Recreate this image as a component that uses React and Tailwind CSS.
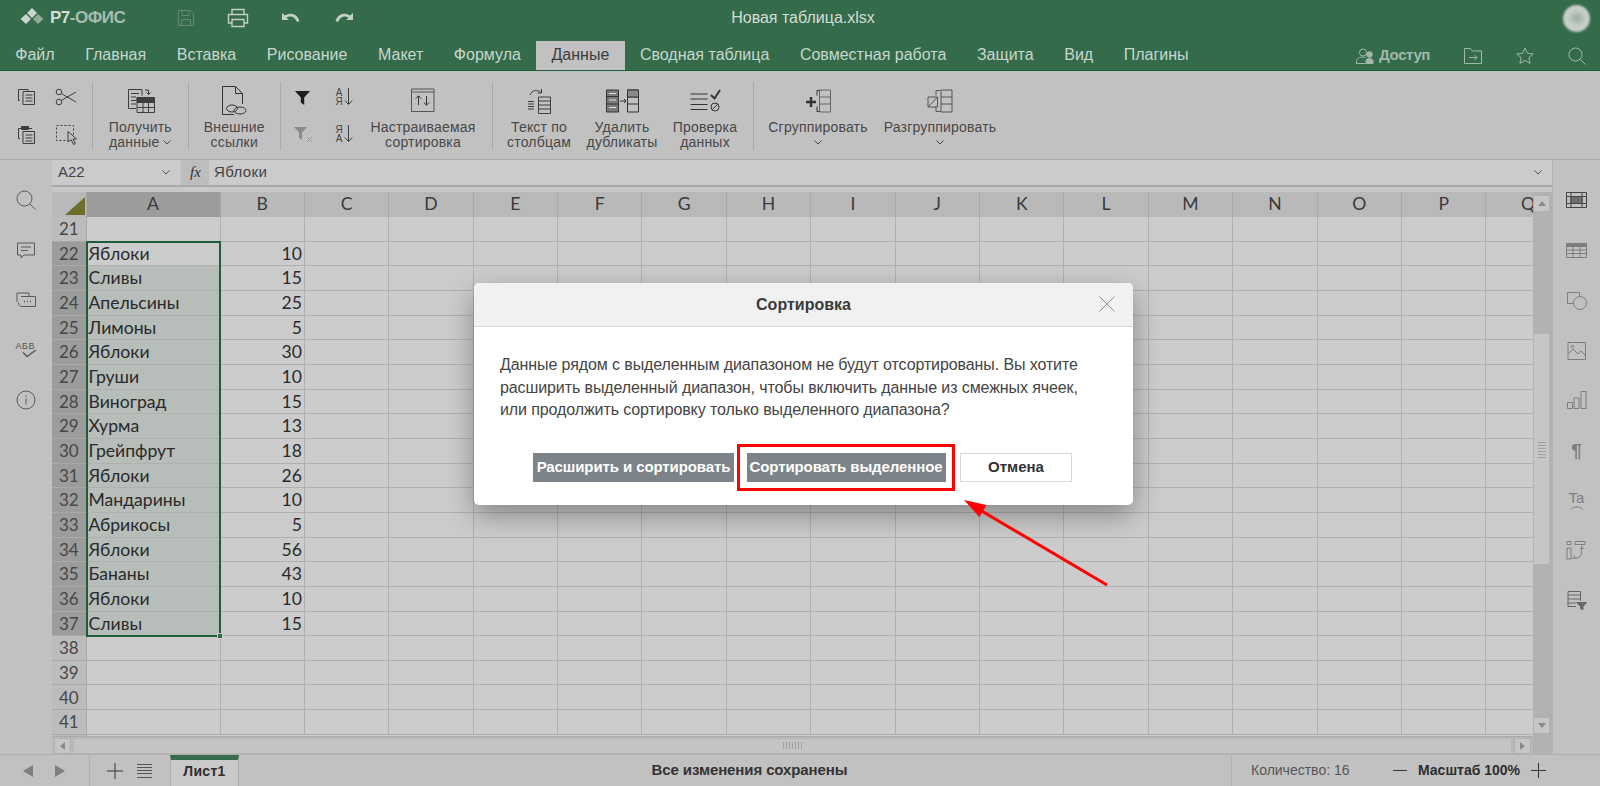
import React from 'react';

const tabs = ['Файл', 'Главная', 'Вставка', 'Рисование', 'Макет', 'Формула', 'Данные', 'Сводная таблица', 'Совместная работа', 'Защита', 'Вид', 'Плагины'];
const cols = ['B', 'C', 'D', 'E', 'F', 'G', 'H', 'I', 'J', 'K', 'L', 'M', 'N', 'O', 'P', 'Q'];
const data = {
  22: ['Яблоки', 10], 23: ['Сливы', 15], 24: ['Апельсины', 25], 25: ['Лимоны', 5],
  26: ['Яблоки', 30], 27: ['Груши', 10], 28: ['Виноград', 15], 29: ['Хурма', 13],
  30: ['Грейпфрут', 18], 31: ['Яблоки', 26], 32: ['Мандарины', 10], 33: ['Абрикосы', 5],
  34: ['Яблоки', 56], 35: ['Бананы', 43], 36: ['Яблоки', 10], 37: ['Сливы', 15],
};
const rows = Array.from({ length: 21 }, (_, i) => i + 21);

function Ico({ w = 24, h = 24, className = '', sw = 1, children }) {
  return (
    <svg width={w} height={h} viewBox={`0 0 ${w} ${h}`} fill="none" stroke="currentColor" strokeWidth={sw} className={`block shrink-0 ${className}`}>
      {children}
    </svg>
  );
}

function Chevron({ className = '' }) {
  return (
    <svg width="8" height="5" viewBox="0 0 8 5" fill="none" stroke="currentColor" className={className}>
      <path d="M.5.5 4 4 7.5.5" />
    </svg>
  );
}

function Tool({ icon, lines, w, chevronInline, chevronBelow }) {
  return (
    <div className={`flex flex-col items-center shrink-0 ${w}`}>
      <div className="h-[38px] pb-px flex items-center justify-center">{icon}</div>
      <div className="text-center text-[14px] leading-[15px] tracking-[0.2px] text-[#484848] whitespace-nowrap">
        <div>{lines[0]}</div>
        <div className="flex items-center justify-center gap-1 h-[15px]">
          {lines[1]}
          {chevronInline && <Chevron />}
          {chevronBelow && <Chevron />}
        </div>
      </div>
    </div>
  );
}

function Sep() {
  return <div className="w-px h-[68px] bg-[#a9a9a9] shrink-0" />;
}

function Cell({ children }) {
  return <div className="h-[30px] flex items-center justify-center text-[#3d3d3d]">{children}</div>;
}

function Side({ children }) {
  return <div className="h-[50px] shrink-0 flex items-center justify-center">{children}</div>;
}

export default function App() {
  return (
    <div className="relative w-[1600px] h-[786px] overflow-hidden flex flex-col bg-[#c1c1c1] font-['Liberation_Sans',Arial,sans-serif]">
      {/* заголовок */}
      <div className="h-[71px] shrink-0 bg-[#336b4b] border-b border-[#1f6440] flex flex-col">
        <div className="h-[35px] grid grid-cols-[1fr_auto_1fr] items-center pl-5 pr-[20px] pt-px">
          <div className="flex items-center">
            <svg width="24" height="20" viewBox="0 0 24 20" className="shrink-0">
              <path d="M12 0l5 5-5 5-5-5z" fill="#c9d6ce" />
              <path d="M6 6l5 5-5 5-5.500-5z" fill="#c9d6ce" />
              <path d="M18 6l5.500 5-5.500 5-5-5z" fill="#8fa99a" />
            </svg>
            <span className="ml-[6px] text-[17px] font-bold text-[#d3ddd7] w-[74px] whitespace-nowrap tracking-[-0.5px]">Р7<span className="text-[#a9bcb1]">-ОФИС</span></span>
            <Ico w={18} h={18} className="ml-[53px] text-[#648a74]">
              <path d="M1.5 1.500h12l3 3v12h-15zM5 1.500v5h7v-5M4.500 16.500v-6h9v6" />
            </Ico>
            <Ico w={22} h={20} className="ml-[32px] text-[#c3d0c8]" sw={1.4}>
              <path d="M5 6V1.500h12V6M5 15H1.500V6.500h19V15H17M5 11.500h12v7H5z" />
            </Ico>
            <svg width="18" height="12" viewBox="0 0 18 12" className="ml-[33px] text-[#c3d0c8]" fill="currentColor">
              <path d="M0 1v7h7L4.500 5.700C8 3.500 12.500 4.500 15 10l2.500-1C15 2 9 0 3 3.500z" />
            </svg>
            <svg width="18" height="12" viewBox="0 0 18 12" className="ml-[35px] text-[#c3d0c8]" fill="currentColor">
              <path d="M18 1v7h-7l2.500-2.300C10 3.500 5.500 4.500 3 10L.5 9C3 2 9 0 15 3.500z" />
            </svg>
          </div>
          <div className="text-[16px] text-[#d3ddd7] pl-[6px]">Новая таблица.xlsx</div>
          <div className="flex justify-end -mr-[10px]">
            <div className="w-[27px] h-[27px] rounded-full bg-[#c7cfca] blur-[1px] flex items-center justify-center">
              <div className="w-[12px] h-[10px] rounded-full bg-[#9fb0a6] blur-[2px]" />
            </div>
          </div>
        </div>
        <div className="flex-1 flex items-end">
          {tabs.map((t) => (
            <div
              key={t}
              className={`h-[29px] flex items-center pb-[1px] px-[15.3px] text-[16px] whitespace-nowrap ${t === 'Данные' ? 'bg-[#c1c1c1] text-[#3c3c3c]' : 'text-[#c9d6ce]'}`}
            >
              {t}
            </div>
          ))}
          <div className="ml-auto h-[29px] flex items-center gap-[34px] pr-[14px] text-[#a3b8ab]">
            <div className="flex items-center gap-[5px]">
              <Ico w={18} h={16}>
                <circle cx="7" cy="4.500" r="3.500" />
                <path d="M.5 15.500v-2c0-3 3-4.500 6.500-4.500 1 0 2 .1 2.800.4M.5 15.500h9" />
                <circle cx="13.500" cy="6.500" r="2.800" fill="currentColor" />
                <path d="M10 15.500v-2.500c0-1.500 1.500-2.500 3.500-2.500s3.500 1 3.500 2.500v2.500z" fill="currentColor" />
              </Ico>
              <span className="text-[15px] font-bold tracking-[-0.4px]">Доступ</span>
            </div>
            <Ico w={18} h={16}>
              <path d="M.5 15.500v-15h6l2 2.500h9v12.500zM5 9.500h8M10.500 7l2.500 2.500L10.500 12" />
            </Ico>
            <Ico w={18} h={18}>
              <path d="M9 1l2.400 5.300 5.800.6-4.400 3.800 1.300 5.700L9 13.500l-5.100 2.900 1.300-5.700L.8 6.900l5.800-.6z" />
            </Ico>
            <Ico w={18} h={18}>
              <circle cx="7.500" cy="7.500" r="6.500" />
              <path d="M12.300 12.300 17.500 17.500" />
            </Ico>
          </div>
        </div>
      </div>

      {/* панель инструментов */}
      <div className="h-[89px] shrink-0 flex items-start pt-[11px] border-b border-[#aaaaaa]">
        <div className="w-[92px] pl-[7.5px] grid grid-cols-[39px_39px] grid-rows-[30px_30px] gap-y-[7px] shrink-0">
          <Cell>
            <Ico w={20} h={18}>
              <path d="M3 12.500H1.500V1.500H11V3M6 3.500h11.500v13H6zM8.500 7h7M8.500 10h7M8.500 13h7" />
            </Ico>
          </Cell>
          <Cell>
            <Ico w={22} h={18}>
              <circle cx="4" cy="4" r="2.800" />
              <circle cx="4" cy="14" r="2.800" />
              <path d="M6.300 5.500 21 14M6.300 12.500 21 4" />
            </Ico>
          </Cell>
          <Cell>
            <Ico w={20} h={19}>
              <path d="M3 13.500H1.500V3.500H15M6 6.500h11.500v12H6zM8.500 10h7M8.500 13h7M8.500 16h7" />
              <path d="M4.500 1.500h7v3h-7z" fill="currentColor" />
            </Ico>
          </Cell>
          <Cell>
            <Ico w={23} h={21}>
              <path d="M1.500 1.500h17v15h-17z" strokeDasharray="2 2" />
              <path d="M13 7.500v10.500l3-2.500 2.500 5 1.800-1-2.300-4.500h3.500z" fill="#c1c1c1" />
            </Ico>
          </Cell>
        </div>
        <Sep />
        <Tool
          w="w-[94.500px]"
          chevronInline
          lines={['Получить', 'данные']}
          icon={
            <Ico w={28} h={26} className="text-[#3d3d3d] ml-[2px]">
              <path d="M9 20.500H1.500V1.500H15v6M4 5.500h8M4 9h5M4 12.500h5M4 16h5M18 2h3.500v4M19.500 4.500l2 2 2-2" />
              <path d="M10 9.500h17.500v15H10zM10 14.500h17.500M10 19.500h17.500M16 9.500v15M21.500 9.500v15" />
              <path d="M10 9.500h17.500v4H10z" fill="currentColor" />
            </Ico>
          }
        />
        <Sep />
        <Tool
          w="w-[91.500px]"
          lines={['Внешние', 'ссылки']}
          icon={
            <Ico w={27} h={30} className="text-[#333]">
              <path d="M13 28.500H1.500V.5h13l7 7V18M14.500.5v7h7" />
              <ellipse cx="11" cy="22.500" rx="5.500" ry="3.500" />
              <ellipse cx="19" cy="24.500" rx="6" ry="3.500" />
            </Ico>
          }
        />
        <Sep />
        <div className="w-[42px] shrink-0 flex flex-col gap-[7px]">
          <Cell>
            <svg width="15" height="15" viewBox="0 0 15 15" fill="#1d1d1d"><path d="M0 1h15L9.200 7.500V15L5.800 12.500v-5z" /></svg>
          </Cell>
          <Cell>
            <svg width="19" height="17" viewBox="0 0 19 17" fill="#8a8a8a" className="ml-[3px]">
              <path d="M0 1h13L8 6.500V14L5 11.500v-5z" />
              <path d="M13 11l5 5M18 11l-5 5" stroke="#9b9b9b" fill="none" />
            </svg>
          </Cell>
        </div>
        <div className="w-[42px] shrink-0 flex flex-col gap-[7px]">
          <Cell>
            <div className="flex items-center gap-[1px]">
              <div className="text-[10px] leading-[9px] text-center text-[#444]">А<br />Я</div>
              <Ico w={9} h={18}><path d="M4.500 0v16M.8 12.500l3.700 4 3.700-4" /></Ico>
            </div>
          </Cell>
          <Cell>
            <div className="flex items-center gap-[1px]">
              <div className="text-[10px] leading-[9px] text-center text-[#444]">Я<br />А</div>
              <Ico w={9} h={18}><path d="M4.500 0v16M.8 12.500l3.700 4 3.700-4" /></Ico>
            </div>
          </Cell>
        </div>
        <Tool
          w="w-[116px]"
          lines={['Настраиваемая', 'сортировка']}
          icon={
            <Ico w={24} h={25} className="text-[#555]">
              <path d="M.5 1h22.500v22.500H.5zM.5 4h22.500" />
              <path d="M7.500 17V8M4.800 10.500l2.700-2.700 2.700 2.700M15.500 8v9M12.800 14.500l2.700 2.700 2.700-2.700" stroke="#333" />
            </Ico>
          }
        />
        <div className="w-[11px] shrink-0" />
        <Sep />
        <div className="flex shrink-0 pl-[4.500px] w-[260px]">
          <Tool
            w="w-[83px]"
            lines={['Текст по', 'столбцам']}
            icon={
              <Ico w={24} h={26} className="text-[#3d3d3d]">
                <path d="M3 7C5 1.500 11 1.500 14 4.500M14.500 1v4h-4" />
                <path d="M1 13.500h6M1 16h6M1 18.500h6M1 21h6" />
                <path d="M11.500 9h12v16.500h-12zM11.500 13h12M11.500 17h12M11.500 21h12" />
              </Ico>
            }
          />
          <Tool
            w="w-[83px]"
            lines={['Удалить', 'дубликаты']}
            icon={
              <Ico w={33} h={24} className="text-[#333]">
                <path d="M.5 1h12v22H.5z" fill="#7a7a7a" />
                <path d="M3 4.500h7M3 11h7M3 18.500h7" stroke="#ddd" />
                <path d="M.5 7.500h12M.5 15h12" />
                <path d="M14 12h6M18 10l2 2-2 2" />
                <path d="M21.500 1h11v22h-11zM21.500 8h11M21.500 15h11" />
                <path d="M21.500 1h11v7h-11z" fill="#8a8a8a" />
              </Ico>
            }
          />
          <Tool
            w="w-[83px]"
            lines={['Проверка', 'данных']}
            icon={
              <Ico w={31} h={24} className="text-[#333]">
                <path d="M.5 5h17M.5 10h17M.5 15.500h17M.5 20.500h17" />
                <path d="M21 6l3.500 3.500L30 1" strokeWidth="2" />
                <circle cx="25" cy="18" r="4" />
                <path d="M22.300 20.500l5.500-5.500" />
              </Ico>
            }
          />
        </div>
        <Sep />
        <div className="flex gap-[7px] pl-[14px] shrink-0">
          <Tool
            w="w-[100px]"
            chevronBelow
            lines={['Сгруппировать', '']}
            icon={
              <Ico w={26} h={24} className="text-[#333]">
                <path d="M15.500 1.500h-3.500v5M12 17.500v5h3.500" />
                <path d="M1 13h10M6 8v10" strokeWidth="2.500" />
                <path d="M14.500 1h11v22h-11zM14.500 8h11M14.500 15h11" stroke="#666" />
              </Ico>
            }
          />
          <Tool
            w="w-[130px]"
            chevronBelow
            lines={['Разгруппировать', '']}
            icon={
              <Ico w={26} h={24} className="text-[#555]">
                <path d="M13.500 1.500H9v5M9 17.500v5h4.500" />
                <path d="M1 8h9.500v10H1zM1 18l9.500-10" />
                <path d="M14 1h11v22H14zM14 8h11M14 15h11" />
              </Ico>
            }
          />
        </div>
      </div>

      <div className="flex-1 flex min-h-0">
        {/* левая колонка */}
        <div className="w-[52px] shrink-0 flex flex-col pt-[15px] text-[#5a5a5a]">
          <Side><Ico w={20} h={20}><circle cx="8.500" cy="8.500" r="7.500" /><path d="M14 14l5.500 5.500" /></Ico></Side>
          <Side><Ico w={20} h={17}><path d="M1.500 1h17v12H8l-3 3v-3H1.500zM5 5h10M5 8.500h7" /></Ico></Side>
          <Side>
            <Ico w={20} h={16}>
              <path d="M1 10V1h12v3" />
              <path d="M5 4.500h14.500v10H5l-2.500-2v-2" />
              <path d="M8 9.500h1M11 9.500h1M14 9.500h1" strokeWidth="1.500" />
            </Ico>
          </Side>
          <Side>
            <div className="w-[21px]">
              <div className="text-[9px] leading-[8px] tracking-[0.5px] text-[#555]">АБВ</div>
              <svg width="15" height="8" viewBox="0 0 15 8" fill="none" stroke="currentColor" strokeWidth="1.5" className="ml-[6px]"><path d="M1 2.500l4 4 9-6.500" /></svg>
            </div>
          </Side>
          <Side><Ico w={20} h={20}><circle cx="10" cy="10" r="9" /><path d="M10 8.500v6M10 5.500v1.500" /></Ico></Side>
        </div>

        {/* центр */}
        <div className="flex-1 min-w-0 flex flex-col">
          <div className="h-[27px] shrink-0 flex border-b-2 border-[#aaaaaa] bg-[#cbcbcb]">
            <div className="w-[128px] flex items-center justify-between pl-[6px] pr-[10px] text-[15px] text-[#444]">
              A22
              <Chevron className="text-[#555]" />
            </div>
            <div className="w-[2px] bg-[#c1c1c1]" />
            <div className="w-[27px] bg-[#bdbdbd] flex items-center justify-center font-['Liberation_Serif',serif] italic text-[15px] text-[#333]">fx</div>
            <div className="flex-1 flex items-center justify-between pl-[5px] pr-[10px] text-[15px] tracking-[0.4px] text-[#444]">
              Яблоки
              <Chevron className="text-[#555]" />
            </div>
          </div>
          <div className="h-[5px] shrink-0 bg-[#c8c8c8]" />
          <div className="flex-1 min-h-0 flex">
            <div className="flex-1 min-w-0 flex flex-col">
              <div className="relative flex-1 min-h-0 overflow-hidden bg-[#cccccc] font-['Lato',sans-serif] text-[17.6px] text-[#2a2a2a]">
                <div className="flex h-[25px] text-[#3a3a3a]">
                  <div className="relative w-[34.500px] shrink-0 bg-[#b9b9b9] border-r border-[#a8a8a8]">
                    <svg width="20" height="18" viewBox="0 0 20 18" className="absolute right-[1px] bottom-[2px]"><path d="M20 0v18H0z" fill="#6e6e2c" /></svg>
                  </div>
                  <div className="w-[134px] shrink-0 bg-[#9c9c9c] border-r border-[#a8a8a8] flex items-center justify-center">A</div>
                  {cols.map((c) => (
                    <div key={c} className="w-[84.400px] shrink-0 bg-[#b9b9b9] border-r border-[#a8a8a8] flex items-center justify-center">{c}</div>
                  ))}
                </div>
                {rows.map((r) => {
                  const sel = r >= 22 && r <= 37;
                  const row = data[r];
                  return (
                    <div key={r} className="flex h-[24.670px]">
                      <div className={`w-[34.500px] shrink-0 border-b border-r border-[#a8a8a8] flex items-center justify-center text-[17px] text-[#474747] ${sel ? 'bg-[#9c9c9c]' : 'bg-[#bcbcbc]'}`}>{r}</div>
                      <div className={`w-[134px] shrink-0 border-b border-r border-[#b0b0b0] pl-[2px] pt-px flex items-center whitespace-nowrap ${sel && r !== 22 ? 'bg-[#b7bdb9]' : ''}`}>{row ? row[0] : ''}</div>
                      {cols.map((c, i) => (
                        <div key={c} className="w-[84.400px] shrink-0 border-b border-r border-[#b0b0b0] pr-[2px] pt-px flex items-center justify-end">{i === 0 && row ? row[1] : ''}</div>
                      ))}
                    </div>
                  );
                })}
                {/* хвост строки 42 */}
                <div className="flex h-[3px]">
                  <div className="w-[34.500px] shrink-0 bg-[#bcbcbc] border-r border-[#a8a8a8]" />
                </div>
                <div className="absolute left-[34px] top-[49px] w-[135px] h-[396px] border-2 border-[#1f5c3c]">
                  <div className="absolute -right-[4px] -bottom-[4px] w-[6px] h-[6px] bg-[#2e6b49] border border-[#cccccc]" />
                </div>
              </div>
              {/* горизонтальная прокрутка */}
              <div className="h-[18px] shrink-0 flex items-center gap-[2px] pl-[2px] bg-[#b9b9b9] border-t border-[#a8a8a8]">
                <div className="w-[17px] h-[16px] shrink-0 bg-[#c6c6c6] border border-[#b0b0b0] flex items-center justify-center">
                  <div className="w-0 h-0 border-y-[4px] border-y-transparent border-r-[5px] border-r-[#8a8a8a]" />
                </div>
                <div className="flex-1 h-[16px] bg-[#c4c4c4] border border-[#b4b4b4] flex items-center justify-center">
                  <div className="w-[20px] h-[7px] bg-[repeating-linear-gradient(90deg,#a0a0a0_0,#a0a0a0_1px,transparent_1px,transparent_3px)]" />
                </div>
                <div className="w-[17px] h-[16px] shrink-0 mr-[2px] bg-[#c6c6c6] border border-[#b0b0b0] flex items-center justify-center">
                  <div className="w-0 h-0 border-y-[4px] border-y-transparent border-l-[5px] border-l-[#8a8a8a]" />
                </div>
              </div>
            </div>
            {/* вертикальная прокрутка */}
            <div className="w-[19px] shrink-0 bg-[#b2b2b2] pt-[3px] pr-[2px] flex flex-col">
              <div className="h-[17px] bg-[#c6c6c6] border border-[#b0b0b0] flex items-center justify-center">
                <div className="w-0 h-0 border-x-[4px] border-x-transparent border-b-[5px] border-b-[#8a8a8a]" />
              </div>
              <div className="mt-[121px] h-[232px] bg-[#c6c6c6] border border-[#b4b4b4] flex items-center justify-center">
                <div className="w-[8px] h-[18px] bg-[repeating-linear-gradient(0deg,#a0a0a0_0,#a0a0a0_1px,transparent_1px,transparent_3px)]" />
              </div>
              <div className="mt-[152px] h-[17px] bg-[#c6c6c6] border border-[#b0b0b0] flex items-center justify-center">
                <div className="w-0 h-0 border-x-[4px] border-x-transparent border-t-[5px] border-t-[#8a8a8a]" />
              </div>
            </div>
          </div>
        </div>

        {/* правая колонка */}
        <div className="w-[48px] shrink-0 flex flex-col pt-[15px] border-l border-[#b4b4b4] text-[#7d7d7d]">
          <Side><Ico w={21} h={16} className="text-[#444]"><path d="M.5.5h20v15H.5zM.5 4.500h20M.5 11.500h20M5 .5v15M16 .5v15" /><path d="M5 4.500h11v7H5z" fill="#6e6e6e" /></Ico></Side>
          <Side><Ico w={21} h={15}><path d="M.5.5h20v14H.5zM.5 7h20M.5 10.500h20M7 3.500v11M14 3.500v11" /><path d="M.5.5h20v3H.5z" fill="currentColor" /></Ico></Side>
          <Side><Ico w={21} h={19}><path d="M8 12.500H1.500v-11h12V6" /><circle cx="14" cy="12" r="6.500" /></Ico></Side>
          <Side><Ico w={21} h={19}><path d="M2 1.500h17.500v17H2z" /><path d="M2 13l5-5 5 5 3-3 4.500 4.500" /><circle cx="6.500" cy="5.500" r="1.200" /></Ico></Side>
          <Side><Ico w={21} h={18}><path d="M1.500 11.500h5v6h-5zM8 7h5v10.500H8zM15 .5h5v17h-5z" /></Ico></Side>
          <Side><div className="text-[19px] leading-none font-bold">¶</div></Side>
          <Side>
            <div className="flex flex-col items-center text-[15px] leading-[14px]">
              Ta
              <svg width="14" height="4" viewBox="0 0 14 4" fill="none" stroke="currentColor" className="mt-[1px]"><path d="M1 3.500C4 0 10 0 13 3.500" /></svg>
            </div>
          </Side>
          <Side><Ico w={21} h={19}><path d="M1 .5h4v3H1zM9 .5h10v3H9zM1 7h4v11H1zM9 17c4 1 8-3 6-9M16 4.500 15 8l3-1M7.500 14l1.500 3-3 .5" /></Ico></Side>
          <Side><Ico w={21} h={19} className="text-[#666]"><path d="M2 .5h12.500V10M2 .5v15h8M2 4h12.500M2 8h12.500M2 12h8" /><path d="M10.500 11.500h10L17 15.500V19l-2.500-1.500v-2z" fill="currentColor" /></Ico></Side>
        </div>
      </div>

      {/* нижняя строка */}
      <div className="h-[32px] shrink-0 flex items-center border-t border-[#b0b0b0] text-[14px] text-[#3a3a3a]">
        <div className="w-[90px] h-full shrink-0 flex items-center pl-[23px] gap-[22px] border-r border-[#b0b0b0]">
          <div className="w-0 h-0 border-y-[6px] border-y-transparent border-r-[10px] border-r-[#7f7f7f]" />
          <div className="w-0 h-0 border-y-[6px] border-y-transparent border-l-[10px] border-l-[#7f7f7f]" />
        </div>
        <div className="w-[80px] shrink-0 flex items-center pl-[17px] gap-[14px] text-[#333]">
          <Ico w={16} h={16}><path d="M8 0v16M0 8h16" /></Ico>
          <Ico w={15} h={14}><path d="M0 .5h15M0 3.500h15M0 6.500h15M0 9.500h15M0 13.500h15" stroke="#555" /></Ico>
        </div>
        <div className="w-[69px] h-full shrink-0 flex items-center justify-center bg-[#c9c9c9] border-t-[5px] border-[#336b4b] border-x border-x-[#b0b0b0] font-bold text-[14px] text-[#2e2e2e] tracking-[0.3px] pb-[3px]">
          Лист1
        </div>
        <div className="flex-1 text-center font-bold text-[15px] tracking-[-0.1px] text-[#333] pl-[29px]">Все изменения сохранены</div>
        <div className="w-[369px] h-full shrink-0 flex items-center pl-[19px] border-l border-[#b0b0b0]">
          <span className="text-[#565656] w-[142px] whitespace-nowrap">Количество: 16</span>
          <span className="w-[14px] h-px bg-[#333] shrink-0" />
          <span className="ml-[11px] font-bold whitespace-nowrap text-[#2e2e2e]">Масштаб 100%</span>
          <Ico w={15} h={15} className="ml-[11px] text-[#333]"><path d="M7.500 0v15M0 7.500h15" /></Ico>
        </div>
      </div>

      {/* диалог */}
      <div className="absolute left-[474px] top-[283px] w-[659px] h-[222px] bg-white rounded-[5px] shadow-[0_10px_28px_rgba(0,0,0,0.35)] overflow-hidden">
        <div className="relative h-[44px] bg-[#f1f1f1] border-b border-[#d8d8d8] flex items-center justify-center font-bold text-[16px] text-[#3a3a3a]">
          Сортировка
          <svg width="16" height="16" viewBox="0 0 16 16" fill="none" stroke="#8f8f8f" className="absolute right-[18px] top-[13px]"><path d="M.5.5l15 15M15.500.5l-15 15" /></svg>
        </div>
        <div className="px-[26px] pt-[27px] text-[16px] leading-[22.500px] tracking-[-0.1px] text-[#444] whitespace-nowrap">
          <div>Данные рядом с выделенным диапазоном не будут отсортированы. Вы хотите</div>
          <div>расширить выделенный диапазон, чтобы включить данные из смежных ячеек,</div>
          <div>или продолжить сортировку только выделенного диапазона?</div>
        </div>
        <div className="flex items-center pl-[59px] pt-[22px]">
          <div className="w-[201px] h-[29px] bg-[#7c8489] flex items-center justify-center text-white font-bold text-[15px] tracking-[-0.1px] whitespace-nowrap">Расширить и сортировать</div>
          <div className="ml-[3px] w-[218px] h-[47px] border-[3px] border-[#f00] flex items-center justify-center">
            <div className="w-[199px] h-[29px] bg-[#7c8489] flex items-center justify-center text-white font-bold text-[15px] tracking-[-0.1px] whitespace-nowrap">Сортировать выделенное</div>
          </div>
          <div className="ml-[5px] w-[112px] h-[29px] bg-white border border-[#d9d9d9] flex items-center justify-center font-bold text-[15px] text-[#333]">Отмена</div>
        </div>
      </div>

      {/* стрелка */}
      <svg width="170" height="105" viewBox="0 0 170 105" className="absolute left-[950px] top-[490px]">
        <path d="M157 95 30 20" stroke="#f00" strokeWidth="3" />
        <path d="M14 10 29.400 27 36.600 15z" fill="#f00" />
      </svg>
    </div>
  );
}
